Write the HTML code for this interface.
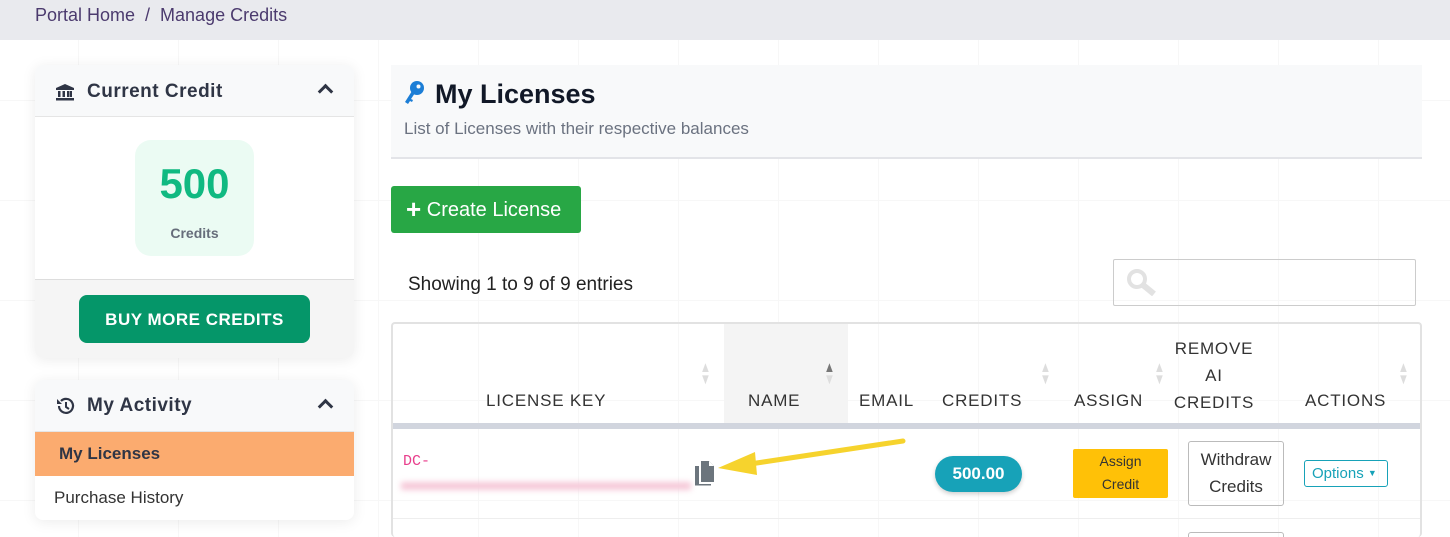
<!DOCTYPE html>
<html><head><meta charset="utf-8"><style>
*{box-sizing:border-box;margin:0;padding:0}
html{width:1450px;height:537px;overflow:hidden}
body{width:1450px;height:537px;overflow:hidden;font-family:"Liberation Sans",sans-serif;background:#fff;position:relative;
background-image:linear-gradient(to right,#f7f7f7 1px,transparent 1px),linear-gradient(to bottom,#f7f7f7 1px,transparent 1px);background-size:100px 100px;background-position:78px 0px}
.a{position:absolute}
.top{left:0;top:0;width:1450px;height:40px;background:#e9eaee;color:#4b3a6e;font-size:18px;padding:5px 0 0 35px}
.card{background:#fff;border-radius:8px;box-shadow:0 2px 14px rgba(0,0,0,.08);overflow:hidden}
.hd{height:52px;background:#f8f9fa;border-bottom:1px solid #e5e5e5;font-size:19px;font-weight:bold;color:#2f3545;letter-spacing:.5px;display:flex;align-items:center;padding-left:20px}
.chev{position:absolute;right:23px;top:21px;width:11px;height:11px;border-left:3px solid #2f3545;border-top:3px solid #2f3545;transform:rotate(45deg)}
.s{color:#ddd;font-size:15px;line-height:12px;transform:scaleX(.75)}
</style></head><body>
<div class="a top">Portal Home&nbsp;&nbsp;/&nbsp;&nbsp;Manage Credits</div>

<div class="a card" style="left:35px;top:65px;width:319px;height:293px">
 <div class="hd" style="position:relative;padding-top:2px"><svg width="20" height="18" viewBox="0 0 20 18" style="margin-right:12px"><path d="M10 1L1 5v2h18V5z" fill="#2f3545"/><rect x="3" y="8" width="2.5" height="6" fill="#2f3545"/><rect x="7.5" y="8" width="2.5" height="6" fill="#2f3545"/><rect x="12" y="8" width="2.5" height="6" fill="#2f3545"/><rect x="15" y="8" width="2" height="6" fill="#2f3545"/><rect x="1" y="15" width="18" height="2.5" fill="#2f3545"/></svg>Current Credit<div class="chev"></div></div>
 <div style="height:163px;position:relative;border-bottom:1px solid #ddd">
  <div class="a" style="left:100px;top:23px;width:119px;height:116px;background:#ebfbf3;border-radius:16px;text-align:center">
   <div style="font-size:42px;font-weight:bold;color:#10b981;margin-top:20px">500</div>
   <div style="font-size:14px;font-weight:bold;color:#666d7a;margin-top:17px">Credits</div>
  </div>
 </div>
 <div style="height:78px;background:#f5f5f5;position:relative">
  <div class="a" style="left:44px;top:15px;width:231px;height:48px;background:#059669;border-radius:8px;color:#fff;font-weight:bold;font-size:17px;letter-spacing:.5px;text-align:center;line-height:50px">BUY MORE CREDITS</div>
 </div>
</div>

<div class="a card" style="left:35px;top:380px;width:319px;height:140px">
 <div class="hd" style="position:relative"><svg width="22" height="20" viewBox="0 0 22 20" style="margin-right:10px"><path d="M4 10a7 7 0 1 0 2-5" fill="none" stroke="#2f3545" stroke-width="2.2"/><path d="M2 3v5h5z" fill="#2f3545"/><path d="M11 6v5l3 2" fill="none" stroke="#2f3545" stroke-width="2"/></svg>My Activity<div class="chev"></div></div>
 <div style="height:44px;background:#fbab6f;color:#2f3545;font-weight:bold;font-size:17px;line-height:44px;padding-left:24px">My Licenses</div>
 <div style="height:44px;color:#333;font-size:17px;line-height:44px;padding-left:19px">Purchase History</div>
</div>

<div class="a" style="left:391px;top:65px;width:1031px;height:94px;background:#f8f9fa;border-bottom:2px solid #e3e4e8">
 <div class="a" style="left:12px;top:14px;font-size:27px;font-weight:bold;color:#111827"><svg width="22" height="26" viewBox="0 0 22 26" style="vertical-align:-3px;margin-right:10px"><circle cx="14" cy="8" r="7" fill="#1c7ed6"/><circle cx="15.5" cy="6.5" r="2" fill="#f8f9fa"/><path d="M9 11L2 22l3 2 2-3 2 1 1-2-2-1 4-6z" fill="#1c7ed6"/></svg>My Licenses</div>
 <div class="a" style="left:13px;top:54px;font-size:17px;color:#6b7280">List of Licenses with their respective balances</div>
</div>

<div class="a" style="left:391px;top:186px;width:190px;height:47px;background:#28a745;border-radius:3px;color:#fff;font-size:20px;line-height:47px;padding-left:15px"><b style="font-size:26px;vertical-align:-2px">+</b> Create License</div>

<div class="a" style="left:408px;top:274px;font-size:19px;color:#222">Showing 1 to 9 of 9 entries</div>
<div class="a" style="left:1113px;top:259px;width:303px;height:47px;border:1px solid #ccc;border-radius:2px">
 <svg class="a" style="left:12px;top:8px" width="32" height="28" viewBox="0 0 32 28"><circle cx="11" cy="11" r="8" fill="none" stroke="#e2e2e2" stroke-width="4"/><path d="M17 17l11 9" stroke="#e2e2e2" stroke-width="6"/></svg>
</div>

<div class="a" style="left:391px;top:322px;width:1031px;height:215px;border:2px solid #e2e2e2;border-radius:4px;border-bottom:none;overflow:hidden">
 <div class="a" style="left:331px;top:0;width:124px;height:101px;background:#f4f4f4"></div>
 <div class="a" style="left:0;top:99px;width:1029px;height:6px;background:#d1d5de"></div>
 <div class="a" style="left:0;top:194px;width:1029px;height:1px;background:#eee"></div>
 <div style="font-size:17px;color:#333;letter-spacing:.8px">
  <div class="a" style="left:93px;top:67px">LICENSE KEY</div>
  <div class="a" style="left:355px;top:67px">NAME</div>
  <div class="a" style="left:466px;top:67px">EMAIL</div>
  <div class="a" style="left:549px;top:67px">CREDITS</div>
  <div class="a" style="left:681px;top:67px">ASSIGN</div>
  <div class="a" style="left:780px;top:11px;text-align:center;line-height:27px;width:118px;margin-left:-18px">REMOVE<br>AI<br>CREDITS</div>
  <div class="a" style="left:912px;top:67px">ACTIONS</div>
 </div>
 <div>
  <div class="a s" style="left:305px;top:38px">▲<br>▼</div>
  <div class="a s" style="left:429px;top:38px"><span style="color:#777">▲</span><br>▼</div>
  <div class="a s" style="left:645px;top:38px">▲<br>▼</div>
  <div class="a s" style="left:759px;top:38px">▲<br>▼</div>
  <div class="a s" style="left:1003px;top:38px">▲<br>▼</div>
 </div>
 <div class="a" style="left:10px;top:129px;font-family:'Liberation Mono',monospace;color:#e83e8c;font-size:15px">DC-</div>
 <div class="a" style="left:8px;top:158px;width:290px;height:8px;background:#f6c8d8;filter:blur(3px)"></div>
 <svg class="a" style="left:300px;top:136px" width="22" height="26" viewBox="0 0 22 26"><path d="M8 1h8l5 5v16H8z" fill="#6c757d"/><path d="M16 1v5h5z" fill="#fff"/><path d="M2 6h4v18h12v1.5H2z" fill="#6c757d"/></svg>
 <div class="a" style="left:542px;top:132px;width:87px;height:36px;background:#17a2b8;border-radius:18px;color:#fff;font-weight:bold;font-size:17px;text-align:center;line-height:36px;box-shadow:0 2px 5px rgba(0,0,0,.2)">500.00</div>
 <div class="a" style="left:680px;top:125px;width:95px;height:49px;background:#ffc107;border-radius:2px;color:#333;font-size:14px;text-align:center;line-height:23px;padding-top:1px">Assign<br>Credit</div>
 <div class="a" style="left:795px;top:117px;width:96px;height:65px;border:1px solid #bbb;border-radius:3px;color:#333;font-size:17px;text-align:center;line-height:27px;padding-top:4px">Withdraw<br>Credits</div>
 <div class="a" style="left:911px;top:136px;width:84px;height:27px;border:1px solid #17a2b8;border-radius:3px;color:#17a2b8;font-size:15px;line-height:25px;padding-left:7px">Options <span style="font-size:9px;vertical-align:2px">▼</span></div>
 <div class="a" style="left:795px;top:208px;width:96px;height:30px;border:1px solid #bbb;border-radius:3px"></div>
</div>

<svg class="a" style="left:710px;top:434px" width="200" height="45" viewBox="0 0 200 45"><path d="M193 7L40 30" stroke="#f6d32d" stroke-width="5" stroke-linecap="round"/><path d="M8 34L45 18 47 41z" fill="#f6d32d"/></svg>
</body></html>
